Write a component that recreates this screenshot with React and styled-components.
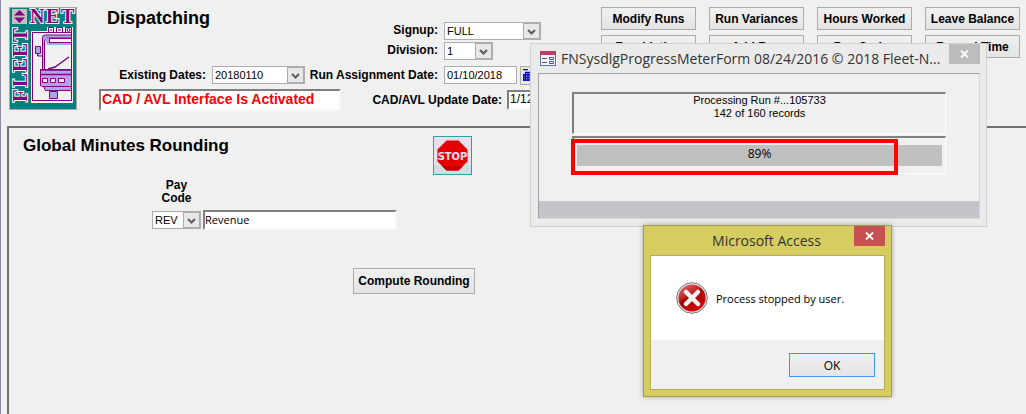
// App.jsx

import React, { useState } from 'react';
import styled, { createGlobalStyle } from 'styled-components';

const navItems = [
    'Modify Runs', 'Run Variances', 'Hours Worked', 'Leave Balance',
    'Run Listing', 'Add Run', 'Pay Codes', 'Record Time',
];

function FleetLogo() {
    return (
        <LogoSvg viewBox="0 0 68 103" role="img" aria-label="Fleet Net">
            <rect x="0.5" y="0.5" width="67" height="102" fill="#008080" stroke="#a8a8a8" />
            <rect x="3" y="2" width="15" height="15" fill="#c0c0c0" />
            <path d="M10.500 3L16 8.500H5zM5 10.500h11l-5.500 5.500z" fill="#800080" />
            <g className="letters">
                <text y="16" fontSize="20">
                    <tspan x="21">N</tspan>
                    <tspan x="37">E</tspan>
                    <tspan x="52">T</tspan>
                </text>
                <text y="18" fontSize="21" transform="translate(0 96) rotate(-90)">
                    <tspan x="1">F</tspan>
                    <tspan x="16">L</tspan>
                    <tspan x="31">E</tspan>
                    <tspan x="46">E</tspan>
                    <tspan x="61">T</tspan>
                </text>
            </g>
            <rect x="22" y="24" width="42" height="72" fill="#f0f0f0" />
            <path d="M38 20h26v5H38z" fill="#f0f0f0" />
            <g fill="none" stroke="#800080">
                <rect x="23.500" y="25.500" width="39" height="68" />
                <path d="M39.500 20.500h5v5h-5zM47.500 20.500h6v5h-6zM56.500 20.500h6v5h-6zM41 23h2M49 23h3" />
                <circle cx="59.500" cy="23" r="1.500" />
                <path d="M33.500 63V31q0-3 3-3h26v35z" fill="#a8a8e8" />
                <path d="M35.500 63V34l2-3h25v32z" fill="#f0f0f0" />
                <path d="M36 31h26v7H38z" fill="#a8a8e8" stroke="none" />
                <rect x="40.500" y="31.500" width="22" height="4" fill="#f0f0f0" />
                <path d="M26.500 39.500h5v7h-5zM28.500 47v2h5" fill="#a8a8e8" />
                <path d="M39 62l7-2 7-5 7-5" strokeWidth="1.500" />
                <path d="M31.500 62.500h31v17h-29l-2-1z" fill="#a8a8e8" />
                <path d="M31 63h31.500M31 67.500h31.500" strokeWidth="1.500" />
                <path d="M33.500 71.500h5v4h-5zM41.500 71.500h5v4h-5zM49.500 71.500h6v4h-6z" fill="#f0f0f0" />
                <path d="M34.500 79.500h28v4h-26z" fill="#a8a8e8" />
                <path d="M40.500 84.500h8v7h-8z" fill="#a8a8e8" />
            </g>
        </LogoSvg>
    );
}

function Combo({ value, width, id }) {
    return (
        <ComboBox $width={width}>
            <select id={id} defaultValue={value}>
                <option>{value}</option>
            </select>
            <span className="arrow" aria-hidden="true">
                <svg width="9" height="7" viewBox="0 0 9 7">
                    <path d="M1 1l3.500 3.500L8 1" fill="none" stroke="#606060" strokeWidth="2.200" />
                </svg>
            </span>
        </ComboBox>
    );
}

function CloseIcon() {
    return (
        <svg width="9" height="8" viewBox="0 0 9 8" aria-hidden="true">
            <path d="M1 .5l7 7M8 .5l-7 7" stroke="#fff" strokeWidth="1.800" />
        </svg>
    );
}

function Header() {
    return (
        <HeaderBar>
            <FleetLogo />
            <HeaderForm>
                <FieldGrid>
                    <PageTitle>Dispatching</PageTitle>
                    <Label htmlFor="signup">Signup:</Label>
                    <Combo id="signup" value="FULL" width={97} />
                    <Label htmlFor="division">Division:</Label>
                    <Combo id="division" value="1" width={49} />
                </FieldGrid>
                <DateRow>
                    <Label htmlFor="existing">Existing Dates:</Label>
                    <Combo id="existing" value="20180110" width={93} />
                    <Label className="second" htmlFor="runDate">Run Assignment Date:</Label>
                    <FlatInput id="runDate" defaultValue="01/10/2018" />
                    <CalendarButton aria-label="Pick date">
                        <svg width="11" height="12" viewBox="0 0 11 12">
                            <path d="M0 .5h5M2 3.500h9M0 6h11M0 8.500h11M0 11h11M2.500 3v9M5 3v9M7.500 3v9M10 3v9M.5 5v7" stroke="#0000d0" strokeWidth="1.300" />
                        </svg>
                    </CalendarButton>
                </DateRow>
                <CadRow>
                    <SunkenInput className="status" aria-label="CAD / AVL status" readOnly value="CAD / AVL Interface Is Activated" />
                    <Label htmlFor="cadDate">CAD/AVL Update Date:</Label>
                    <SunkenInput className="date" id="cadDate" defaultValue="1/12/2018" />
                </CadRow>
            </HeaderForm>
            <Nav>
                {navItems.map((item) => (
                    <PushButton key={item}>{item}</PushButton>
                ))}
            </Nav>
        </HeaderBar>
    );
}

function RoundingPanel() {
    return (
        <Panel>
            <PanelHead>
                <h2>Global Minutes Rounding</h2>
                <StopButton aria-label="Stop">
                    <svg width="31" height="31" viewBox="0 0 31 31">
                        <path d="M9.500.5h12l9 9v12l-9 9h-12l-9-9v-12z" fill="#e60000" />
                        <path d="M5 26h21l-4.500 4.500h-12z" fill="#c00000" />
                        <text x="15.500" y="20" textAnchor="middle">STOP</text>
                    </svg>
                </StopButton>
            </PanelHead>
            <PayFields>
                <Label htmlFor="payCode">Pay<br />Code</Label>
                <div>
                    <Combo id="payCode" value="REV" width={49} />
                    <SunkenInput className="pay" aria-label="Pay code name" defaultValue="Revenue" />
                </div>
            </PayFields>
            <ComputeButton>Compute Rounding</ComputeButton>
        </Panel>
    );
}

function ProgressDialog({ percent, onClose }) {
    return (
        <ProgressWindow role="dialog" aria-label="Progress">
            <TitleBar>
                <svg width="16" height="15" viewBox="0 0 16 15" aria-hidden="true">
                    <rect x="0.500" y="0.500" width="15" height="14" fill="#f4f6fb" stroke="#6674a0" />
                    <path d="M0 0h16v4H0z" fill="#b84068" />
                    <path d="M2 7.500h5M2 11.500h5" stroke="#44558c" />
                    <path d="M9.500 6.500h4v2h-4zM9.500 10.500h4v2h-4z" fill="#fff" stroke="#44558c" />
                </svg>
                <span>FNSysdlgProgressMeterForm 08/24/2016 © 2018 Fleet-N...</span>
                <CloseButton aria-label="Close" onClick={onClose}><CloseIcon /></CloseButton>
            </TitleBar>
            <ProgressClient>
                <Message>
                    Processing Run #...105733<br />
                    142 of 160 records
                </Message>
                <Meter>
                    <div className="fill" role="progressbar" aria-valuenow={percent}>{percent}%</div>
                    <Highlight />
                </Meter>
                <StatusStrip />
            </ProgressClient>
        </ProgressWindow>
    );
}

function AlertDialog({ onClose }) {
    return (
        <AlertWindow role="alertdialog" aria-label="Microsoft Access">
            <TitleBar $centered>
                <span>Microsoft Access</span>
                <CloseButton $danger aria-label="Close" onClick={onClose}><CloseIcon /></CloseButton>
            </TitleBar>
            <AlertClient>
                <AlertBody>
                    <svg width="32" height="32" viewBox="0 0 32 32" aria-hidden="true">
                        <defs>
                            <linearGradient id="red" x1="0" y1="0" x2="0.600" y2="1">
                                <stop offset="0" stopColor="#e87070" />
                                <stop offset="0.450" stopColor="#c02626" />
                                <stop offset="0.500" stopColor="#a00808" />
                                <stop offset="1" stopColor="#d80808" />
                            </linearGradient>
                        </defs>
                        <circle cx="16" cy="16" r="15.300" fill="#e4e4e4" stroke="#787878" />
                        <circle cx="16" cy="16" r="13.600" fill="url(#red)" />
                        <path d="M10 10l12 12M22 10L10 22" stroke="#f2f2f2" strokeWidth="4.500" strokeLinecap="round" />
                    </svg>
                    <p>Process stopped by user.</p>
                </AlertBody>
                <AlertFooter>
                    <button onClick={onClose}>OK</button>
                </AlertFooter>
            </AlertClient>
        </AlertWindow>
    );
}

function App() {
    const [showProgress, setShowProgress] = useState(true);
    const [showAlert, setShowAlert] = useState(true);

    return (
        <>
            <GlobalStyle />
            <Shell>
                <Header />
                <RoundingPanel />
                {showProgress && <ProgressDialog percent={89} onClose={() => setShowProgress(false)} />}
                {showAlert && <AlertDialog onClose={() => setShowAlert(false)} />}
            </Shell>
        </>
    );
}

const GlobalStyle = createGlobalStyle`
    * {
        box-sizing: border-box;
    }
    body {
        margin: 0;
        background: #f0f0f0;
        color: #000;
        font: 12px "Liberation Sans", Arial, sans-serif;
    }
    h1, h2, p {
        margin: 0;
    }
    button, input, select {
        font: inherit;
        color: inherit;
        border-radius: 0;
        outline: none;
    }
    svg {
        display: block;
        flex: none;
    }
`;

const Shell = styled.div`
    position: relative;
    display: flex;
    flex-direction: column;
    min-height: 100vh;
    overflow: hidden;
    border-left: 1px solid #8c8c9c;
`;

const HeaderBar = styled.header`
    display: flex;
    align-items: flex-start;
    padding: 7px 6px 15px 8px;
`;

const LogoSvg = styled.svg`
    width: 68px;
    height: 103px;

    .letters text {
        font-family: "Liberation Serif", serif;
        font-weight: bold;
        fill: #800080;
        stroke: #fff;
        stroke-width: 2px;
        paint-order: stroke;
    }
`;

const HeaderForm = styled.div`
    flex: none;
    width: 464px;
    margin-left: 22px;
`;

const FieldGrid = styled.div`
    display: grid;
    grid-template-columns: 1fr 60px 97px;
    grid-template-rows: 17px 17px;
    column-gap: 6px;
    row-gap: 3px;
    align-items: center;
    padding: 15px 22px 0 0;
    line-height: 15px;
`;

const PageTitle = styled.h1`
    grid-row: 1 / 3;
    align-self: start;
    margin-top: -16px;
    padding-left: 8px;
    font-size: 18px;
    line-height: 24px;
`;

const Label = styled.label`
    font-weight: bold;
    text-align: right;
    white-space: nowrap;
    line-height: 13px;
`;

const DateRow = styled.div`
    display: flex;
    align-items: center;
    margin-top: 6px;
    height: 20px;

    > label {
        width: 107px;
        margin-right: 6px;
    }
    .second {
        width: 133px;
    }
`;

const CadRow = styled.div`
    display: flex;
    align-items: center;
    margin-top: 4px;

    > label {
        margin: 0 5px 0 auto;
    }
`;

const ComboBox = styled.span`
    position: relative;
    display: flex;
    width: ${(props) => props.$width}px;
    height: 18px;
    background: #fff;
    border: 1px solid #abadb3;

    select {
        appearance: none;
        width: 100%;
        padding: 0 18px 0 2px;
        border: none;
        background: transparent;
        font-size: 11px;
        line-height: 14px;
    }
    .arrow {
        position: absolute;
        top: 0;
        right: 0;
        bottom: 0;
        display: flex;
        align-items: center;
        justify-content: center;
        width: 17px;
        padding-top: 3px;
        background: #e8e8e8;
        border: 1px solid #acacac;
        pointer-events: none;
    }
`;

const FlatInput = styled.input`
    width: 73px;
    height: 18px;
    padding: 0 2px;
    background: #fff;
    border: 1px solid #abadb3;
    font-size: 11px;
`;

const SunkenInput = styled.input`
    height: 20px;
    padding: 0 0 2px 1px;
    background: #fff;
    border: 2px solid;
    border-color: #808080 #f8f8f8 #f8f8f8 #808080;

    &.status {
        width: 242px;
        height: 22px;
        color: #f00;
        font-size: 14px;
        font-weight: bold;
    }
    &.date {
        width: 56px;
    }
    &.pay {
        width: 194px;
        padding-left: 0;
        margin-left: 2px;
        font-family: "Open Sans", sans-serif;
        font-size: 11px;
    }
`;

const CalendarButton = styled.button`
    display: flex;
    align-items: center;
    width: 18px;
    height: 19px;
    margin-left: 3px;
    padding: 0 2px;
    background: #e8e8e8;
    border: 1px solid #acacac;
`;

const PushButton = styled.button`
    height: 23px;
    padding: 0;
    font-weight: bold;
    white-space: nowrap;
    background: linear-gradient(#f0f0f0, #e4e4e4);
    border: 1px solid #acacac;
`;

const Nav = styled.nav`
    display: grid;
    grid-template-columns: repeat(4, 95px);
    gap: 5px 13px;
    margin-left: auto;
`;

const Panel = styled.main`
    flex: 1;
    margin-left: 6px;
    padding: 8px 14px;
    border: 2px solid #707070;
    border-width: 2px 0 0 2px;
`;

const PanelHead = styled.div`
    display: flex;
    align-items: flex-start;

    h2 {
        width: 410px;
        font-size: 17px;
        line-height: 20px;
    }
`;

const StopButton = styled.button`
    width: 39px;
    height: 39px;
    padding: 3px;
    background: linear-gradient(#e6e0ec 75%, #c4e4e4 75%);
    border: 1px solid #30a0a0;

    text {
        fill: #f0e4f0;
        font: bold 11px "DejaVu Sans Condensed", "Liberation Sans", sans-serif;
    }
`;

const PayFields = styled.div`
    margin: 4px 0 0 129px;

    > label {
        display: block;
        width: 49px;
        text-align: center;
    }
    > div {
        display: flex;
        align-items: center;
        margin-top: 5px;
    }
`;

const ComputeButton = styled(PushButton)`
    width: 122px;
    height: 26px;
    margin: 38px 0 0 330px;
`;

// the two dialogs float over the form
const Window = styled.section`
    position: absolute;
    font-family: "Open Sans", sans-serif;
    padding: 0 6px 7px 7px;
`;

const ProgressWindow = styled(Window)`
    top: 43px;
    left: 529px;
    width: 457px;
    background: #ebebeb;
    border: 1px solid #d0d0d0;
`;

const AlertWindow = styled(Window)`
    top: 225px;
    left: 642px;
    width: 249px;
    padding: 0 6px 6px;
    background: #d6cd60;
    border: 1px solid #a59e45;
    box-shadow: 0 0 5px rgba(0, 0, 0, 0.3);
`;

const TitleBar = styled.header`
    display: flex;
    align-items: center;
    height: 29px;
    padding-left: 2px;
    color: #333;
    font-size: 14px;
    line-height: 29px;
    white-space: nowrap;

    span {
        flex: 1;
        margin-left: 5px;
        padding-left: ${(props) => (props.$centered ? '22px' : '0')};
        text-align: ${(props) => (props.$centered ? 'center' : 'left')};
    }
`;

const CloseButton = styled.button`
    display: flex;
    align-items: center;
    justify-content: center;
    align-self: flex-start;
    flex: none;
    width: 31px;
    height: 20px;
    padding: 0;
    border: none;
    background: ${(props) => (props.$danger ? '#c75050' : '#bcbcbc')};
`;

const ProgressClient = styled.div`
    background: #f0f0f0;
    border: 1px solid #d8d8d8;
    border-top-color: #a0a0a0;
    border-left-color: #a0a0a0;
    padding-top: 18px;
`;

const Message = styled.p`
    height: 42px;
    margin: 0 33px;
    border: solid;
    border-width: 2px 1px 1px 2px;
    border-color: #808080 #fff #fff #808080;
    font: 11px/13px "Liberation Sans", Arial, sans-serif;
    text-align: center;
`;

const Meter = styled.div`
    position: relative;
    height: 38px;
    margin: 2px 33px 27px;
    padding: 7px 3px 0;
    border: solid;
    border-width: 2px 1px 1px 2px;
    border-color: #808080 #fff #fff #808080;

    .fill {
        height: 21px;
        background: #c0c0c0;
        line-height: 18px;
        text-align: center;
    }
`;

const Highlight = styled.div`
    position: absolute;
    top: 1px;
    left: -3px;
    width: 327px;
    height: 36px;
    border: 4px solid #f00;
`;

const StatusStrip = styled.div`
    height: 17px;
    background: #c4c5ca;
`;

const AlertClient = styled.div`
    background: #fff;
    border: 1px solid #b5ac50;
`;

const AlertBody = styled.div`
    display: flex;
    align-items: center;
    gap: 8px;
    height: 84px;
    padding-left: 25px;

    p {
        font-size: 11px;
        white-space: nowrap;
    }
`;

const AlertFooter = styled.div`
    display: flex;
    justify-content: flex-end;
    padding: 13px 9px 12px;
    background: #f0f0f0;

    button {
        width: 86px;
        height: 24px;
        padding: 0;
        background: linear-gradient(#f0f0f0, #e4e4e4);
        border: 1px solid #3399ff;
    }
`;

export default App;
